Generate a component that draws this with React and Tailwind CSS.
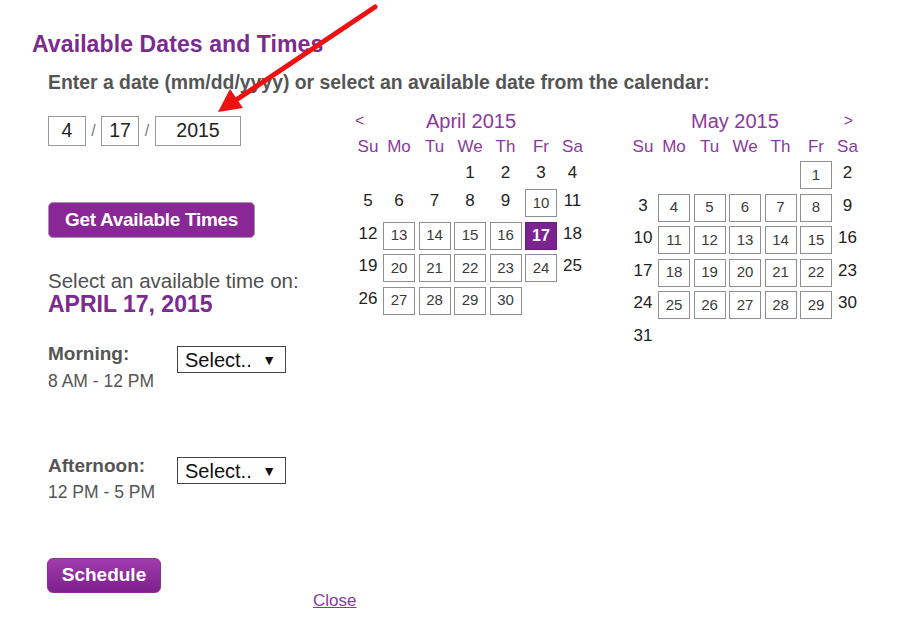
import React from 'react';

const april = { first: 3, count: 30, boxed: [10, 13, 14, 15, 16, 17, 20, 21, 22, 23, 24, 27, 28, 29, 30], selected: 17 };
const may = { first: 5, count: 31, boxed: [1, 4, 5, 6, 7, 8, 11, 12, 13, 14, 15, 18, 19, 20, 21, 22, 25, 26, 27, 28, 29], selected: null };
const weekdays = ['Su', 'Mo', 'Tu', 'We', 'Th', 'Fr', 'Sa'];

function buildRows(month) {
  const cells = [];
  for (let i = 0; i < month.first; i++) cells.push(null);
  for (let d = 1; d <= month.count; d++) cells.push(d);
  const rows = [];
  for (let i = 0; i < cells.length; i += 7) rows.push(cells.slice(i, i + 7));
  return rows;
}

function DayCell({ day, col, month }) {
  const inner = col === 0 || col === 6 ? 'w-full' : 'w-[32px]';
  if (day === null) return <div />;
  if (month.boxed.includes(day)) {
    const sel = day === month.selected;
    return (
      <div className="pt-[1px]">
        <div
          className={
            sel
              ? 'w-[32px] h-[28px] flex items-center justify-center bg-[#7b2391] border border-[#6a1c80] text-white font-bold text-[16px]'
              : 'w-[32px] h-[28px] flex items-center justify-center border border-[#8f8f8f] text-[#3a3a3a] text-[15px]'
          }
        >
          {day}
        </div>
      </div>
    );
  }
  return <div className={`${inner} text-center text-[17px] leading-[26px] text-[#222]`}>{day}</div>;
}

function Calendar({ month, header }) {
  const rows = buildRows(month);
  return (
    <div className="w-[232px]">
      {header}
      <div className="grid grid-cols-[30px_repeat(5,35.5px)_24px] h-[26px] text-[17px] leading-[26px] text-[#8a3a9c]">
        {weekdays.map((w, i) => (
          <div key={w} className={i === 0 || i === 6 ? 'text-center' : 'w-[32px] text-center'}>{w}</div>
        ))}
      </div>
      {rows.map((row, ri) => {
        const hasBox = row.some((d) => d !== null && month.boxed.includes(d));
        return (
          <div
            key={ri}
            className={`grid grid-cols-[30px_repeat(5,35.5px)_24px] items-start ${hasBox ? 'h-[32.5px]' : 'h-[28px]'}`}
          >
            {row.map((d, ci) => (
              <DayCell key={ci} day={d} col={ci} month={month} />
            ))}
          </div>
        );
      })}
    </div>
  );
}

function FakeSelect({ className = '' }) {
  return (
    <div className={`w-[109px] h-[27px] border border-[#444] bg-white flex items-center justify-between pl-[7px] pr-[9px] text-[20px] text-[#111] ${className}`}>
      <span className="leading-none">Select..</span>
      <span className="text-[14px] leading-none">▼</span>
    </div>
  );
}

export default function App() {
  return (
    <div className="relative w-[900px] h-[636px] bg-white overflow-hidden font-['Liberation_Sans',Arial,sans-serif]">
      <h1 className="pl-[32px] pt-[30px] text-[23px] leading-[28px] font-bold tracking-[0.1px] text-[#7b2a8f]">Available Dates and Times</h1>
      <p className="pl-[48px] mt-[12px] text-[19.4px] leading-[24px] font-bold text-[#555]">
        Enter a date (mm/dd/yyyy) or select an available date from the calendar:
      </p>

      <div className="flex mt-[14px]">
        {/* left column */}
        <div className="w-[305px] ml-[48px] flex flex-col items-start">
          <div className="mt-[8px] h-[30px] flex items-center text-[19.5px] text-[#222]">
            <div className="w-[38px] h-[30px] border border-[#999] flex items-center justify-center">4</div>
            <span className="w-[15px] text-center text-[16px] text-[#777]">/</span>
            <div className="w-[38px] h-[30px] border border-[#999] flex items-center justify-center">17</div>
            <span className="w-[16px] text-center text-[16px] text-[#777]">/</span>
            <div className="w-[86px] h-[30px] border border-[#999] flex items-center justify-center">2015</div>
          </div>

          <button className="mt-[56px] w-[207px] h-[36px] rounded-[5px] bg-[#8a2797] border border-[#a58fac] text-white font-bold text-[19px] tracking-[-0.3px] flex items-center justify-center">
            Get Available Times
          </button>

          <div className="mt-[32px] text-[20.5px] leading-[22px] text-[#505050]">Select an available time on:</div>
          <div className="text-[23px] leading-[24px] font-bold text-[#7b2a8f]">APRIL 17, 2015</div>

          <div className="mt-[27px] flex items-start">
            <div className="w-[129px]">
              <div className="text-[19px] leading-[22px] font-bold text-[#555]">Morning:</div>
              <div className="mt-[6px] text-[17.5px] leading-[20px] text-[#555]">8 AM - 12 PM</div>
            </div>
            <FakeSelect className="mt-[3px]" />
          </div>

          <div className="mt-[64px] flex items-start">
            <div className="w-[129px]">
              <div className="text-[19px] leading-[22px] font-bold text-[#555]">Afternoon:</div>
              <div className="mt-[5px] text-[17.5px] leading-[20px] text-[#555]">12 PM - 5 PM</div>
            </div>
            <FakeSelect className="mt-[2px]" />
          </div>

          <button className="mt-[56px] -ml-[1px] w-[114px] h-[35px] rounded-[6px] bg-gradient-to-b from-[#a13cae] to-[#7d1e8c] border border-[#8a3096] text-white font-bold text-[19px] flex items-center justify-center">
            Schedule
          </button>
          <a href="#" className="ml-[265px] text-[17px] leading-[16px] text-[#8a3a9c] underline">Close</a>
        </div>

        {/* April */}
        <Calendar
          month={april}
          header={
            <div className="flex items-center h-[26px] text-[#8a3a9c]">
              <span className="w-[73px] pl-[2px] text-[16px]">&lt;</span>
              <span className="text-[20px]">April 2015</span>
            </div>
          }
        />

        {/* May */}
        <div className="ml-[43px]">
          <Calendar
            month={may}
            header={
              <div className="flex items-center h-[26px] text-[#8a3a9c]">
                <span className="pl-[63px] text-[20px]">May 2015</span>
                <span className="ml-auto pr-[7px] text-[16px]">&gt;</span>
              </div>
            }
          />
        </div>
      </div>

      {/* red annotation arrow */}
      <svg className="absolute left-0 top-0 pointer-events-none" width="900" height="636">
        <line x1="375" y1="7" x2="236" y2="100" stroke="#ee1111" strokeWidth="5" strokeLinecap="round" />
        <polygon points="218,112 243,108 230,89" fill="#ee1111" />
      </svg>
    </div>
  );
}
